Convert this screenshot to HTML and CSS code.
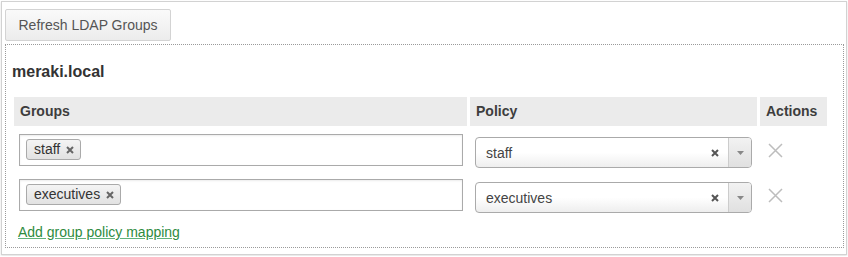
FILE: index.html
```html
<!DOCTYPE html>
<html>
<head>
<meta charset="utf-8">
<link rel="stylesheet" href="styles.css">
</head>
<body>
<div class="panel">
  <button class="btn">Refresh LDAP Groups</button>
  <div class="ldap-box">
    <h3 class="domain">meraki.local</h3>
    <table class="map-table">
      <thead>
        <tr>
          <th class="col-groups">Groups</th>
          <th class="col-policy">Policy</th>
          <th class="col-actions">Actions</th>
        </tr>
      </thead>
      <tbody>
        <tr>
          <td>
            <div class="tag-input">
              <span class="tag">staff <svg class="tag-x" viewBox="0 0 8 8"><path d="M1 1L7 7M7 1L1 7"/></svg></span>
            </div>
          </td>
          <td>
            <div class="select">
              <span class="select-text">staff</span>
              <svg class="sel-clear" viewBox="0 0 8 8"><path d="M1 1L7 7M7 1L1 7"/></svg>
              <span class="sel-arrow"><svg viewBox="0 0 7 4"><path d="M0 0H7L3.5 4Z"/></svg></span>
            </div>
          </td>
          <td>
            <svg class="remove" viewBox="0 0 15 15"><path d="M1 1L14 14M14 1L1 14"/></svg>
          </td>
        </tr>
        <tr>
          <td>
            <div class="tag-input">
              <span class="tag">executives <svg class="tag-x" viewBox="0 0 8 8"><path d="M1 1L7 7M7 1L1 7"/></svg></span>
            </div>
          </td>
          <td>
            <div class="select">
              <span class="select-text">executives</span>
              <svg class="sel-clear" viewBox="0 0 8 8"><path d="M1 1L7 7M7 1L1 7"/></svg>
              <span class="sel-arrow"><svg viewBox="0 0 7 4"><path d="M0 0H7L3.5 4Z"/></svg></span>
            </div>
          </td>
          <td>
            <svg class="remove" viewBox="0 0 15 15"><path d="M1 1L14 14M14 1L1 14"/></svg>
          </td>
        </tr>
      </tbody>
    </table>
    <a class="add-link" href="#">Add group policy mapping</a>
  </div>
</div>
</body>
</html>
```

FILE: styles.css
```css
html, body {
  margin: 0;
  padding: 0;
  background: #fff;
}
body {
  padding: 1px;
  font-family: "Liberation Sans", Arial, sans-serif;
  color: #333;
}
.panel {
  box-sizing: border-box;
  width: 846px;
  height: 254px;
  border: 1px solid #d2d2d2;
  box-shadow: 0 1px 2px rgba(0,0,0,0.12);
  padding: 7px 2px 0 3px;
}
.btn {
  display: block;
  box-sizing: border-box;
  width: 166px;
  height: 32px;
  margin: 0;
  padding: 0;
  border: 1px solid #d3d3d3;
  border-radius: 2px;
  background: linear-gradient(#fafafa, #ececec);
  font-family: "Liberation Sans", Arial, sans-serif;
  font-size: 14px;
  color: #555;
  text-align: center;
}
.ldap-box {
  box-sizing: border-box;
  margin-top: 3px;
  height: 204px;
  border: 1px dotted #9a9a9a;
  padding: 17px 0 0 5px;
}
.domain {
  margin: 0 0 15px 1px;
  font-size: 16px;
  line-height: 20px;
  font-weight: bold;
  color: #333;
}
.map-table {
  border-collapse: separate;
  border-spacing: 3px 0;
  margin-left: 0;
}
.map-table th {
  background: #ebebeb;
  height: 29px;
  padding: 0 6px;
  text-align: left;
  font-size: 14px;
  font-weight: bold;
  color: #3d3d3d;
  line-height: 29px;
}
.col-groups { width: 441px; }
.col-policy { width: 275px; }
.col-actions { width: 55px; }
.map-table td {
  padding: 8px 0 3px 0;
  vertical-align: top;
}
.tag-input {
  box-sizing: border-box;
  width: 444px;
  height: 32px;
  margin-left: 5px;
  border: 1px solid #aaa;
  box-shadow: inset 0 1px 2px rgba(0,0,0,0.08);
  padding: 4px 0 0 6px;
  background: #fff;
}
.tag {
  display: inline-flex;
  align-items: center;
  box-sizing: border-box;
  height: 21px;
  padding: 0 6px 0 7px;
  border: 1px solid #aaa;
  border-radius: 3px;
  background: linear-gradient(#f4f4f4, #e2e2e2);
  font-size: 14px;
  color: #333;
  line-height: 19px;
}
.tag-x {
  width: 8px;
  height: 8px;
  margin-left: 6px;
  stroke: #666;
  stroke-width: 2;
  fill: none;
}
.select {
  display: flex;
  align-items: center;
  box-sizing: border-box;
  width: 277px;
  height: 31px;
  margin: 3px 0 0 5px;
  border: 1px solid #aaa;
  border-radius: 4px;
  background: linear-gradient(#ffffff 50%, #eeeeee);
  overflow: hidden;
}
.select-text {
  flex: 1;
  padding-left: 10px;
  font-size: 14px;
  color: #444;
}
.sel-clear {
  width: 8px;
  height: 8px;
  margin-right: 9px;
  stroke: #555;
  stroke-width: 2;
  fill: none;
}
.sel-arrow {
  display: flex;
  align-items: center;
  justify-content: center;
  width: 22px;
  align-self: stretch;
  border-left: 1px solid #ccc;
  background: linear-gradient(#f2f2f2, #e0e0e0);
}
.sel-arrow svg {
  width: 7px;
  height: 4px;
  fill: #888;
}
.remove {
  display: block;
  width: 15px;
  height: 15px;
  margin: 9px 0 0 8px;
  stroke: #bdbdbd;
  stroke-width: 1.5;
  fill: none;
}
.add-link {
  display: inline-block;
  margin: 8px 0 0 7px;
  font-size: 14px;
  line-height: 16px;
  color: #2e8b3e;
  text-decoration: underline;
  text-decoration-color: #5fb37a;
}
```
